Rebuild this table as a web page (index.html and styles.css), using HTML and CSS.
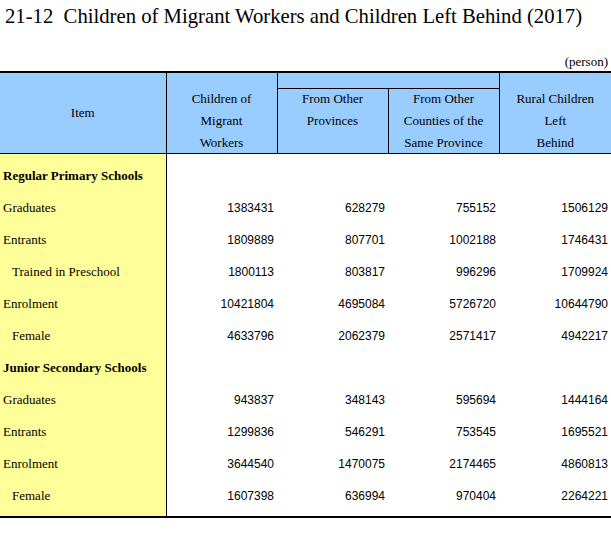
FILE: index.html
```html
<!DOCTYPE html>
<html>
<head>
<meta charset="utf-8">
<link rel="stylesheet" href="styles.css">
</head>
<body>
<h1 class="title">21-12&nbsp; Children of Migrant Workers and Children Left Behind (2017)</h1>
<div class="unit">(person)</div>
<table class="data">
  <colgroup>
    <col class="c-item">
    <col class="c-num">
    <col class="c-num">
    <col class="c-num">
    <col class="c-last">
  </colgroup>
  <thead>
    <tr class="h1row">
      <th rowspan="2" class="h-item">Item</th>
      <th rowspan="2" class="h-bottom"><div class="hx">Children of<br>Migrant<br>Workers</div></th>
      <th colspan="2" class="h-span"></th>
      <th rowspan="2" class="h-bottom h-last"><div class="hx">Rural Children<br>Left<br>Behind</div></th>
    </tr>
    <tr class="h2row">
      <th class="h-top"><div class="hx hx-top">From Other<br>Provinces</div></th>
      <th class="h-top"><div class="hx hx-top">From Other<br>Counties of the<br>Same Province</div></th>
    </tr>
  </thead>
  <tbody>
    <tr class="first"><td class="lbl bold">Regular Primary Schools</td><td></td><td></td><td></td><td></td></tr>
    <tr><td class="lbl">Graduates</td><td>1383431</td><td>628279</td><td>755152</td><td>1506129</td></tr>
    <tr><td class="lbl">Entrants</td><td>1809889</td><td>807701</td><td>1002188</td><td>1746431</td></tr>
    <tr><td class="lbl sub">Trained in Preschool</td><td>1800113</td><td>803817</td><td>996296</td><td>1709924</td></tr>
    <tr><td class="lbl">Enrolment</td><td>10421804</td><td>4695084</td><td>5726720</td><td>10644790</td></tr>
    <tr><td class="lbl sub">Female</td><td>4633796</td><td>2062379</td><td>2571417</td><td>4942217</td></tr>
    <tr><td class="lbl bold">Junior Secondary Schools</td><td></td><td></td><td></td><td></td></tr>
    <tr><td class="lbl">Graduates</td><td>943837</td><td>348143</td><td>595694</td><td>1444164</td></tr>
    <tr><td class="lbl">Entrants</td><td>1299836</td><td>546291</td><td>753545</td><td>1695521</td></tr>
    <tr><td class="lbl">Enrolment</td><td>3644540</td><td>1470075</td><td>2174465</td><td>4860813</td></tr>
    <tr class="last"><td class="lbl sub">Female</td><td>1607398</td><td>636994</td><td>970404</td><td>2264221</td></tr>
  </tbody>
</table>
</body>
</html>
```
FILE: styles.css
```css
html, body {
  margin: 0;
  padding: 0;
  background: #ffffff;
}
body {
  font-family: "Liberation Serif", "Times New Roman", serif;
  color: #000;
}
.title {
  margin: 0;
  padding: 4px 0 0 5px;
  font-size: 20.7px;
  line-height: 24px;
  font-weight: normal;
}
.unit {
  margin-top: 26px;
  text-align: right;
  padding-right: 3px;
  font-size: 13px;
  line-height: 16px;
}
.data {
  margin-top: 1px;
  width: 611px;
  table-layout: fixed;
  border-collapse: collapse;
  font-size: 13px;
}
.c-item { width: 166px; }
.c-num { width: 111px; }
.c-last { width: 112px; }
.data thead th {
  background: #99ccff;
  font-weight: normal;
  font-size: 13px;
  line-height: 22px;
  text-align: center;
  padding: 0;
  border: 1px solid #000;
}
.data thead tr.h1row th {
  border-top: 2px solid #000;
}
.data thead th.h-last { border-right: none; }
.data thead th:first-child { border-left: none; }
.h-span { height: 15px; }
.h-item { vertical-align: middle; }
.h-bottom { vertical-align: bottom; }
.h-top { vertical-align: top; }
.hx { height: 64px; padding-bottom: 1px; }
.hx-top { margin-top: -1px; height: 65px; padding-bottom: 0; }
.data tbody td {
  padding: 0 3px 0 0;
  height: 32px;
  line-height: 32px;
  font-family: "Liberation Sans", Arial, sans-serif;
  font-size: 12px;
  text-align: right;
  white-space: nowrap;
}
.data tbody td.lbl {
  background: #ffff99;
  font-family: "Liberation Serif", "Times New Roman", serif;
  font-size: 13px;
  text-align: left;
  padding-left: 3px;
  border-right: 1px solid #000;
}
.data tbody td.sub { padding-left: 12px; }
.data tbody td.bold { font-weight: bold; }
.data tbody tr.first td { padding-top: 6px; }
.data tbody tr.last td {
  padding-bottom: 4px;
  border-bottom: 2px solid #000;
}
```
